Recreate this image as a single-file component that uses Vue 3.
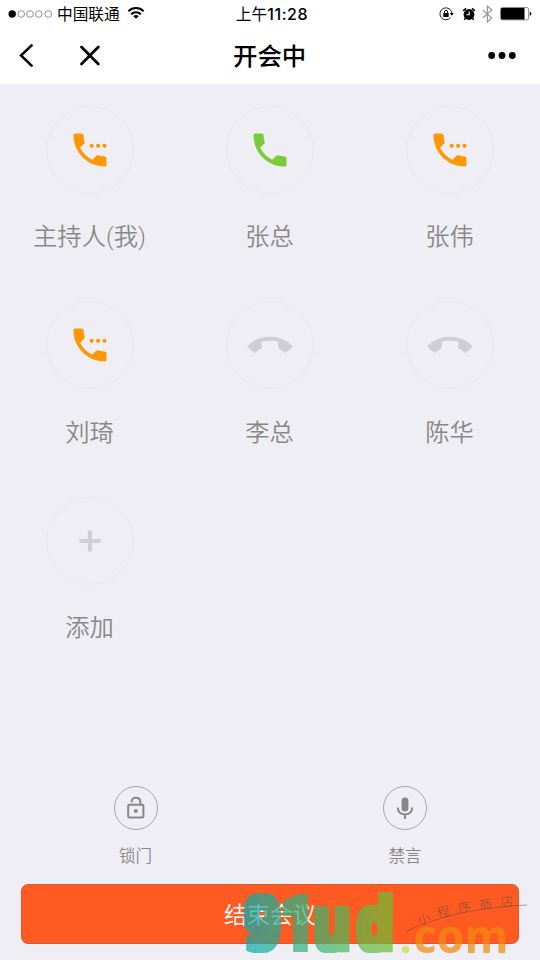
<script setup>
const members = [
  { name: '主持人(我)', state: 'calling' },
  { name: '张总', state: 'active' },
  { name: '张伟', state: 'calling' },
  { name: '刘琦', state: 'calling' },
  { name: '李总', state: 'ended' },
  { name: '陈华', state: 'ended' },
  { name: '添加', state: 'add' },
]
</script>

<template>
  <div class="screen">
    <header class="top">
      <div class="status">
        <div class="side">
          <svg class="signal" width="46" height="10" viewBox="0 0 46 10">
            <circle cx="4.2" cy="5" r="3.7" fill="#000" />
            <g fill="none" stroke="#777" stroke-width=".8">
              <circle cx="13.2" cy="5" r="3.3" /><circle cx="22" cy="5" r="3.3" />
              <circle cx="30.8" cy="5" r="3.3" /><circle cx="40.2" cy="5" r="3.3" />
            </g>
          </svg>
          <span class="carrier">中国联通</span>
          <svg class="wifi" width="18" height="13" viewBox="0 0 18 13" fill="none" stroke="#000" stroke-width="2">
            <path d="M1.4 4.2a10.8 10.8 0 0 1 15.2 0M4.2 7.3a6.8 6.8 0 0 1 9.6 0" />
            <path d="M9 11.8L6.3 9.2a3.9 3.9 0 0 1 5.4 0z" fill="#000" stroke="none" />
          </svg>
        </div>
        <span class="time">上午<span class="clock">11:28</span></span>
        <div class="side right">
          <svg width="15" height="14" viewBox="0 0 15 14">
            <path d="M11.6 10.6A6 6 0 1 1 12.9 6.2" fill="none" stroke="#222" stroke-width="1" />
            <path d="M10.7 6.1h4.2l-2.1 2.7z" />
            <rect x="4.3" y="6.1" width="5.4" height="4" rx=".5" />
            <path d="M5.4 6.3V5a1.6 1.6 0 0 1 3.2 0v1.3" fill="none" stroke="#000" />
          </svg>
          <svg class="alarm" width="14" height="14" viewBox="0 0 14 14">
            <circle cx="7" cy="7.5" r="5.4" />
            <path d="M1.2 3.8l2.9-2.5M9.9 1.3l2.9 2.5M3.6 11.2l-1.4 1.6M10.4 11.2l1.4 1.6" stroke="#000" stroke-width="1.6" />
            <path d="M7.2 4.4v3.4H4.5" fill="none" stroke="#fff" stroke-width="1.1" />
          </svg>
          <svg class="bt" width="11" height="18" viewBox="0 0 11 18" fill="none" stroke="#999" stroke-width="1.2">
            <path d="M.8 5l9 8-4.4 4V1l4.4 4-9 8" />
          </svg>
          <svg class="battery" width="32" height="14" viewBox="0 0 32 14">
            <rect x=".5" y=".5" width="28.2" height="12.4" rx="2" fill="none" stroke="#888" />
            <path d="M2.2 1h22.3v11.4H2.2A1.2 1.2 0 0 1 1 11.2v-9A1.2 1.2 0 0 1 2.2 1z" />
            <path d="M29.8 4.5q3.3 2.2 0 4.4z" />
          </svg>
        </div>
      </div>
      <nav class="nav">
        <svg class="back" width="16" height="24" viewBox="0 0 16 24" fill="none" stroke="#000" stroke-width="2.5" stroke-linecap="round">
          <path d="M13.6 1.4L3 11.5l10.6 10.2" />
        </svg>
        <svg class="close" width="22" height="22" viewBox="0 0 22 22" fill="none" stroke="#000" stroke-width="2.8" stroke-linecap="round">
          <path d="M2.5 2.1l16.8 16.8M19.3 2.1L2.5 18.9" />
        </svg>
        <h1>开会中</h1>
        <svg class="more" width="28" height="8" viewBox="0 0 28 8">
          <circle cx="3.7" cy="3.5" r="3.4" /><circle cx="14" cy="3.5" r="3.4" /><circle cx="24.3" cy="3.5" r="3.4" />
        </svg>
      </nav>
    </header>

    <main class="members">
      <div v-for="m in members" :key="m.name" class="member">
        <div class="avatar">
          <svg v-if="m.state === 'calling' || m.state === 'active'" width="44" height="44" viewBox="0 0 24 24" :class="m.state">
            <path d="M20 15.5c-1.25 0-2.45-.2-3.57-.57-.35-.11-.74-.03-1.02.24l-2.2 2.2c-2.83-1.44-5.15-3.75-6.59-6.58l2.2-2.21c.28-.27.36-.66.25-1.01C8.7 6.45 8.5 5.25 8.5 4c0-.55-.45-1-1-1H4c-.55 0-1 .45-1 1 0 9.39 7.61 17 17 17 .55 0 1-.45 1-1v-3.5c0-.55-.45-1-1-1z" />
            <g v-if="m.state === 'calling'">
              <circle cx="12.9" cy="9.7" r="1.15" /><circle cx="16.4" cy="9.7" r="1.15" /><circle cx="19.9" cy="9.7" r="1.15" />
            </g>
          </svg>
          <svg v-else-if="m.state === 'ended'" class="idle" width="46" height="18" viewBox="0 0 46 18">
            <path d="M.9 9.6Q10 .8 23 .8t22.1 8.8q.8.8 0 1.6L39.3 16.5q-.9.8-1.8.1l-5.7-4.3q-.5-.4-.5-1.2V5.7Q23 3.6 14.7 5.7v5.4q0 .8-.5 1.2l-5.7 4.3q-.9.7-1.8-.1L.9 11.2q-.8-.8 0-1.6z" />
          </svg>
          <svg v-else class="idle" width="22" height="22" viewBox="0 0 22 22">
            <path d="M8.9.4h4.2v8.5h8.5v4.2h-8.5v8.5H8.9v-8.5H.4V8.9h8.5z" />
          </svg>
        </div>
        <span class="name">{{ m.name }}</span>
      </div>
    </main>

    <footer class="bottom">
      <div class="controls">
        <div class="control">
          <div class="ring">
            <svg width="18" height="24" viewBox="0 0 18 24" fill="none" stroke="#888" stroke-width="2">
              <rect x="1.2" y="8.7" width="15.2" height="12.8" rx="1" />
              <path d="M4.7 6.2C4.5 3.3 6 1.8 8.8 1.8s4.5 1.5 4.5 4.1v3" />
              <circle cx="8.8" cy="15.1" r="2" fill="#888" stroke="none" />
            </svg>
          </div>
          <span>锁门</span>
        </div>
        <div class="control">
          <div class="ring">
            <svg width="18" height="24" viewBox="0 0 18 24">
              <rect x="5.6" y="1.5" width="6.8" height="14" rx="3.3" fill="#888" />
              <path d="M1.8 11.5c.2 4.5 3 6.9 7.2 6.9s7-2.4 7.2-6.9M9 18v5" fill="none" stroke="#888" stroke-width="2" />
            </svg>
          </div>
          <span>禁言</span>
        </div>
      </div>
      <button class="end">结束会议</button>
    </footer>

    <svg class="watermark" width="300" height="80" viewBox="240 880 300 80">
      <defs>
        <linearGradient id="brand" gradientUnits="userSpaceOnUse" x1="0" y1="0" x2="179" y2="0">
          <stop offset="0" stop-color="#00abb1" />
          <stop offset="1" stop-color="#70be2b" />
        </linearGradient>
        <filter id="block" filterUnits="userSpaceOnUse" x="240" y="880" width="160" height="80" color-interpolation-filters="sRGB">
          <feMorphology operator="dilate" radius="4 4" />
        </filter>
      </defs>
      <g filter="url(#block)" opacity=".7">
        <text class="brand" transform="translate(243 0) scale(.84 1)" x="2.5 48 85 136.5" y="947.5" fill="url(#brand)" stroke="url(#brand)">9<tspan class="one">1</tspan>ud</text>
      </g>
      <circle cx="405.5" cy="949.5" r="3.8" fill="#d4e157" opacity=".85" />
      <text class="domain" x="413.5" y="952.5" textLength="95" lengthAdjust="spacingAndGlyphs">com</text>
      <path d="M406 931.5Q454 908 527 905" fill="none" stroke="#754b3c" stroke-width="1" opacity=".55" />
      <g class="script">
        <text transform="translate(419 925) rotate(-15)">小</text>
        <text transform="translate(438 918) rotate(-12)">程</text>
        <text transform="translate(459 913) rotate(-10)">序</text>
        <text transform="translate(480 910) rotate(-8)">商</text>
        <text transform="translate(501 907) rotate(-6)">店</text>
      </g>
    </svg>
  </div>
</template>

<style>
body { margin: 0; background: #efeef4; }
</style>

<style scoped>
.screen {
  position: relative;
  display: flex;
  flex-direction: column;
  width: 540px;
  height: 960px;
  overflow: hidden;
  background: #efeef4;
  font-family: Inter, "Noto Sans CJK SC", sans-serif;
}
svg { display: block; flex: none; }
.top { height: 84px; background: #fff; }
.status {
  display: grid;
  grid-template-columns: 1fr auto 1fr;
  align-items: center;
  height: 27px;
  padding: 0 8px;
  color: #000;
}
.side { display: flex; align-items: center; }
.right { justify-content: flex-end; }
.carrier { margin-left: 3px; padding-top: 2px; font-size: 15.7px; line-height: 24px; }
.wifi { margin-left: 7px; }
.time { padding: 1px 0 0 4px; font-size: 15.7px; line-height: 24px; }
.clock { font-size: 16px; font-weight: 500; letter-spacing: .6px; }
.alarm { margin-left: 8px; }
.bt { margin-left: 6px; }
.battery { margin-left: 7px; }
.nav { display: flex; align-items: center; height: 57px; padding: 0 24px 0 18px; }
.close { margin-left: 45px; }
.nav h1 {
  flex: 1;
  margin: 1px 0 0 132px;
  font-size: 24.4px;
  line-height: 36px;
  font-weight: 500;
}
.members {
  display: grid;
  grid-template-columns: repeat(3, 180px);
  grid-auto-rows: 195.7px;
  margin-left: -1px;
  padding-top: 21.7px;
}
.member { display: flex; flex-direction: column; align-items: center; }
.avatar {
  display: flex;
  align-items: center;
  justify-content: center;
  box-sizing: border-box;
  width: 88px;
  height: 88px;
  margin-left: 1px;
  border: 1.5px solid #e9e9ec;
  border-radius: 50%;
}
.calling { fill: #ff9807; }
.active { fill: #7acb38; }
.idle { fill: #ceced3; }
.name {
  margin-top: 25.3px;
  padding-left: 1px;
  color: #888;
  font-family: Roboto, "Noto Sans CJK SC", sans-serif;
  font-size: 24.3px;
  font-weight: 350;
  line-height: 36px;
}
.bottom { margin-top: auto; padding: 0 21px 16px; }
.controls { display: flex; justify-content: space-between; padding: 0 92px 0 92.5px; }
.control { display: flex; flex-direction: column; align-items: center; color: #888; }
.control span { margin-top: 13px; font-size: 16.5px; font-weight: 350; line-height: 26px; }
.ring {
  display: flex;
  align-items: center;
  justify-content: center;
  box-sizing: border-box;
  width: 44px;
  height: 44px;
  border: 1.6px solid #a6a6aa;
  border-radius: 50%;
}
.end {
  display: block;
  width: 498px;
  height: 60px;
  margin-top: 15px;
  padding: 0 0 2px;
  border: 1px solid #e1582e;
  border-radius: 7px;
  background: #ff5a22;
  color: #fff;
  font-family: "Noto Sans CJK SC", sans-serif;
  font-size: 23px;
  font-weight: 350;
}
.watermark { position: absolute; left: 240px; top: 880px; }
.brand {
  font-family: "DejaVu Sans", sans-serif;
  font-size: 66px;
  font-weight: 400;
  stroke-width: 2px;
  stroke-linejoin: round;
}
.one { font-family: Roboto, sans-serif; }
.domain {
  fill: #f28a10;
  font-family: "Open Sans", sans-serif;
  font-size: 47px;
  font-weight: 700;
  opacity: .72;
}
.script {
  fill: #754b3c;
  font-family: "Noto Sans CJK SC", sans-serif;
  font-size: 13px;
  font-weight: 300;
  opacity: .8;
}
</style>
